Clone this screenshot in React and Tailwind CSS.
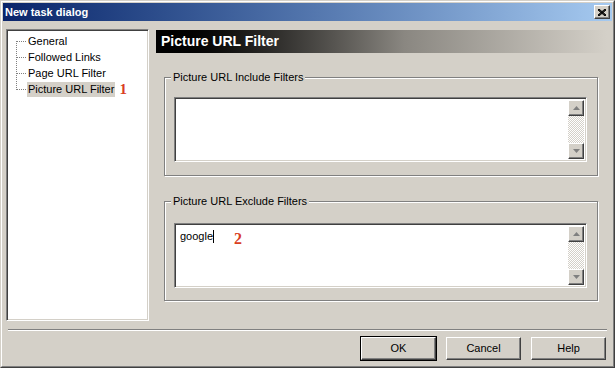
import React from 'react';

const raised =
  'border border-t-white border-l-white border-r-[#404040] border-b-[#404040] shadow-[inset_-1px_-1px_0_#808080,inset_1px_1px_0_#d4d0c8]';
const sunken =
  'border border-t-[#808080] border-l-[#808080] border-r-white border-b-white shadow-[inset_1px_1px_0_#404040,inset_-1px_-1px_0_#d4d0c8]';

function TreeRow({ label, first, last, selected, mark }) {
  return (
    <div className="flex h-[16px] items-center ml-[9px]">
      <svg width="11" height="16" className="shrink-0">
        <line
          x1="0.5"
          y1={first ? 8 : 0}
          x2="0.5"
          y2={last ? 9 : 16}
          stroke="#808080"
          strokeDasharray="1 1"
        />
        <line x1="1" y1="8.5" x2="10" y2="8.5" stroke="#808080" strokeDasharray="1 1" />
      </svg>
      <span className={`px-[1px] h-[15px] leading-[15px] ${selected ? 'bg-[#d4d0c8]' : ''}`}>
        {label}
      </span>
      {mark && (
        <span className="ml-[4px] font-['Liberation_Serif',serif] font-bold text-[15px] leading-none text-[#d9401f]">
          {mark}
        </span>
      )}
    </div>
  );
}

function Arrow({ up }) {
  return (
    <div className={`w-[16px] h-[16px] bg-[#d4d0c8] flex items-center justify-center ${raised}`}>
      <svg width="7" height="4">
        {up ? (
          <polygon points="3.5,0 7,4 0,4" fill="#808080" />
        ) : (
          <polygon points="0,0 7,0 3.5,4" fill="#808080" />
        )}
      </svg>
    </div>
  );
}

function TextBox({ children }) {
  return (
    <div className={`flex h-[65px] w-[413px] bg-white ${sunken} p-[2px]`}>
      <div className="flex-1 px-[3px] pt-[2px]">{children}</div>
      <div className="flex flex-col w-[16px]">
        <Arrow up />
        <div className="flex-1 bg-[repeating-conic-gradient(#d4d0c8_0%_25%,#ffffff_0%_50%)] bg-[length:2px_2px]" />
        <Arrow />
      </div>
    </div>
  );
}

function Group({ title, className, gap, children }) {
  return (
    <fieldset
      className={`ml-[8px] w-[434px] border border-[#808080] shadow-[inset_1px_1px_0_#fff,1px_1px_0_#fff] px-[9px] ${className}`}
    >
      <legend className="ml-[-3px] px-[2px] bg-[#d4d0c8] h-[13px] leading-[13px]">{title}</legend>
      <div className={gap}>{children}</div>
    </fieldset>
  );
}

function Button({ children, def }) {
  return (
    <div className={def ? 'border border-black' : 'p-[1px]'}>
      <div
        className={`w-[75px] h-[23px] flex items-center justify-center bg-[#d4d0c8] ${raised}`}
      >
        {children}
      </div>
    </div>
  );
}

export default function App() {
  return (
    <div className="w-[615px] h-[368px] bg-[#d4d0c8] border border-t-[#d4d0c8] border-l-[#d4d0c8] border-r-[#404040] border-b-[#404040] font-['Liberation_Sans',Arial,sans-serif] text-[11px] text-black">
      <div className="h-full border border-t-white border-l-white border-r-[#808080] border-b-[#808080] p-[1px] flex flex-col">
        {/* title bar */}
        <div className="h-[18px] flex items-center justify-between bg-gradient-to-r from-[#0a246a] to-[#a6caf0] pl-[2px] pr-[2px]">
          <span className="text-white font-bold text-[11px]">New task dialog</span>
          <div className={`w-[16px] h-[14px] bg-[#d4d0c8] flex items-center justify-center ${raised}`}>
            <svg width="8" height="7">
              <path d="M0 0 L8 7 M1 0 L8 6 M0 1 L7 7 M8 0 L0 7 M7 0 L0 6 M8 1 L1 7" stroke="#000" strokeWidth="1" />
            </svg>
          </div>
        </div>

        <div className="flex mt-[8px] ml-[3px]">
          {/* tree */}
          <div className={`w-[143px] h-[292px] bg-white ${sunken} pt-[3px]`}>
            <TreeRow label="General" first />
            <TreeRow label="Followed Links" />
            <TreeRow label="Page URL Filter" />
            <TreeRow label="Picture URL Filter" last selected mark="1" />
          </div>

          {/* page */}
          <div className="ml-[7px] w-[451px]">
            <div className="mt-[1px] h-[23px] flex items-center pl-[5px] bg-gradient-to-r from-black via-[#8a8781] via-55% to-[#d4d0c8] text-white font-bold text-[14px]">
              Picture URL Filter
            </div>
            <Group title="Picture URL Include Filters" className="mt-[18px] h-[105px]" gap="mt-[13px]">
              <TextBox />
            </Group>
            <Group title="Picture URL Exclude Filters" className="mt-[19px] h-[106px]" gap="mt-[15px]">
              <TextBox>
                <div className="flex items-start">
                  <span className="mt-[2px] leading-[13px]">google</span>
                  <span className="mt-[2px] w-[1px] h-[13px] bg-black" />
                  <span className="ml-[20px] mt-[3px] font-['Liberation_Serif',serif] font-bold text-[16px] leading-none text-[#d9401f]">
                    2
                  </span>
                </div>
              </TextBox>
            </Group>
          </div>
        </div>

        {/* separator */}
        <div className="ml-[5px] mt-[8px] w-[599px] border-t border-t-[#808080] border-b border-b-white" />

        <div className="flex justify-end gap-[8px] mt-[5px] pr-[5px]">
          <Button def>OK</Button>
          <Button>Cancel</Button>
          <Button>Help</Button>
        </div>
      </div>
    </div>
  );
}
